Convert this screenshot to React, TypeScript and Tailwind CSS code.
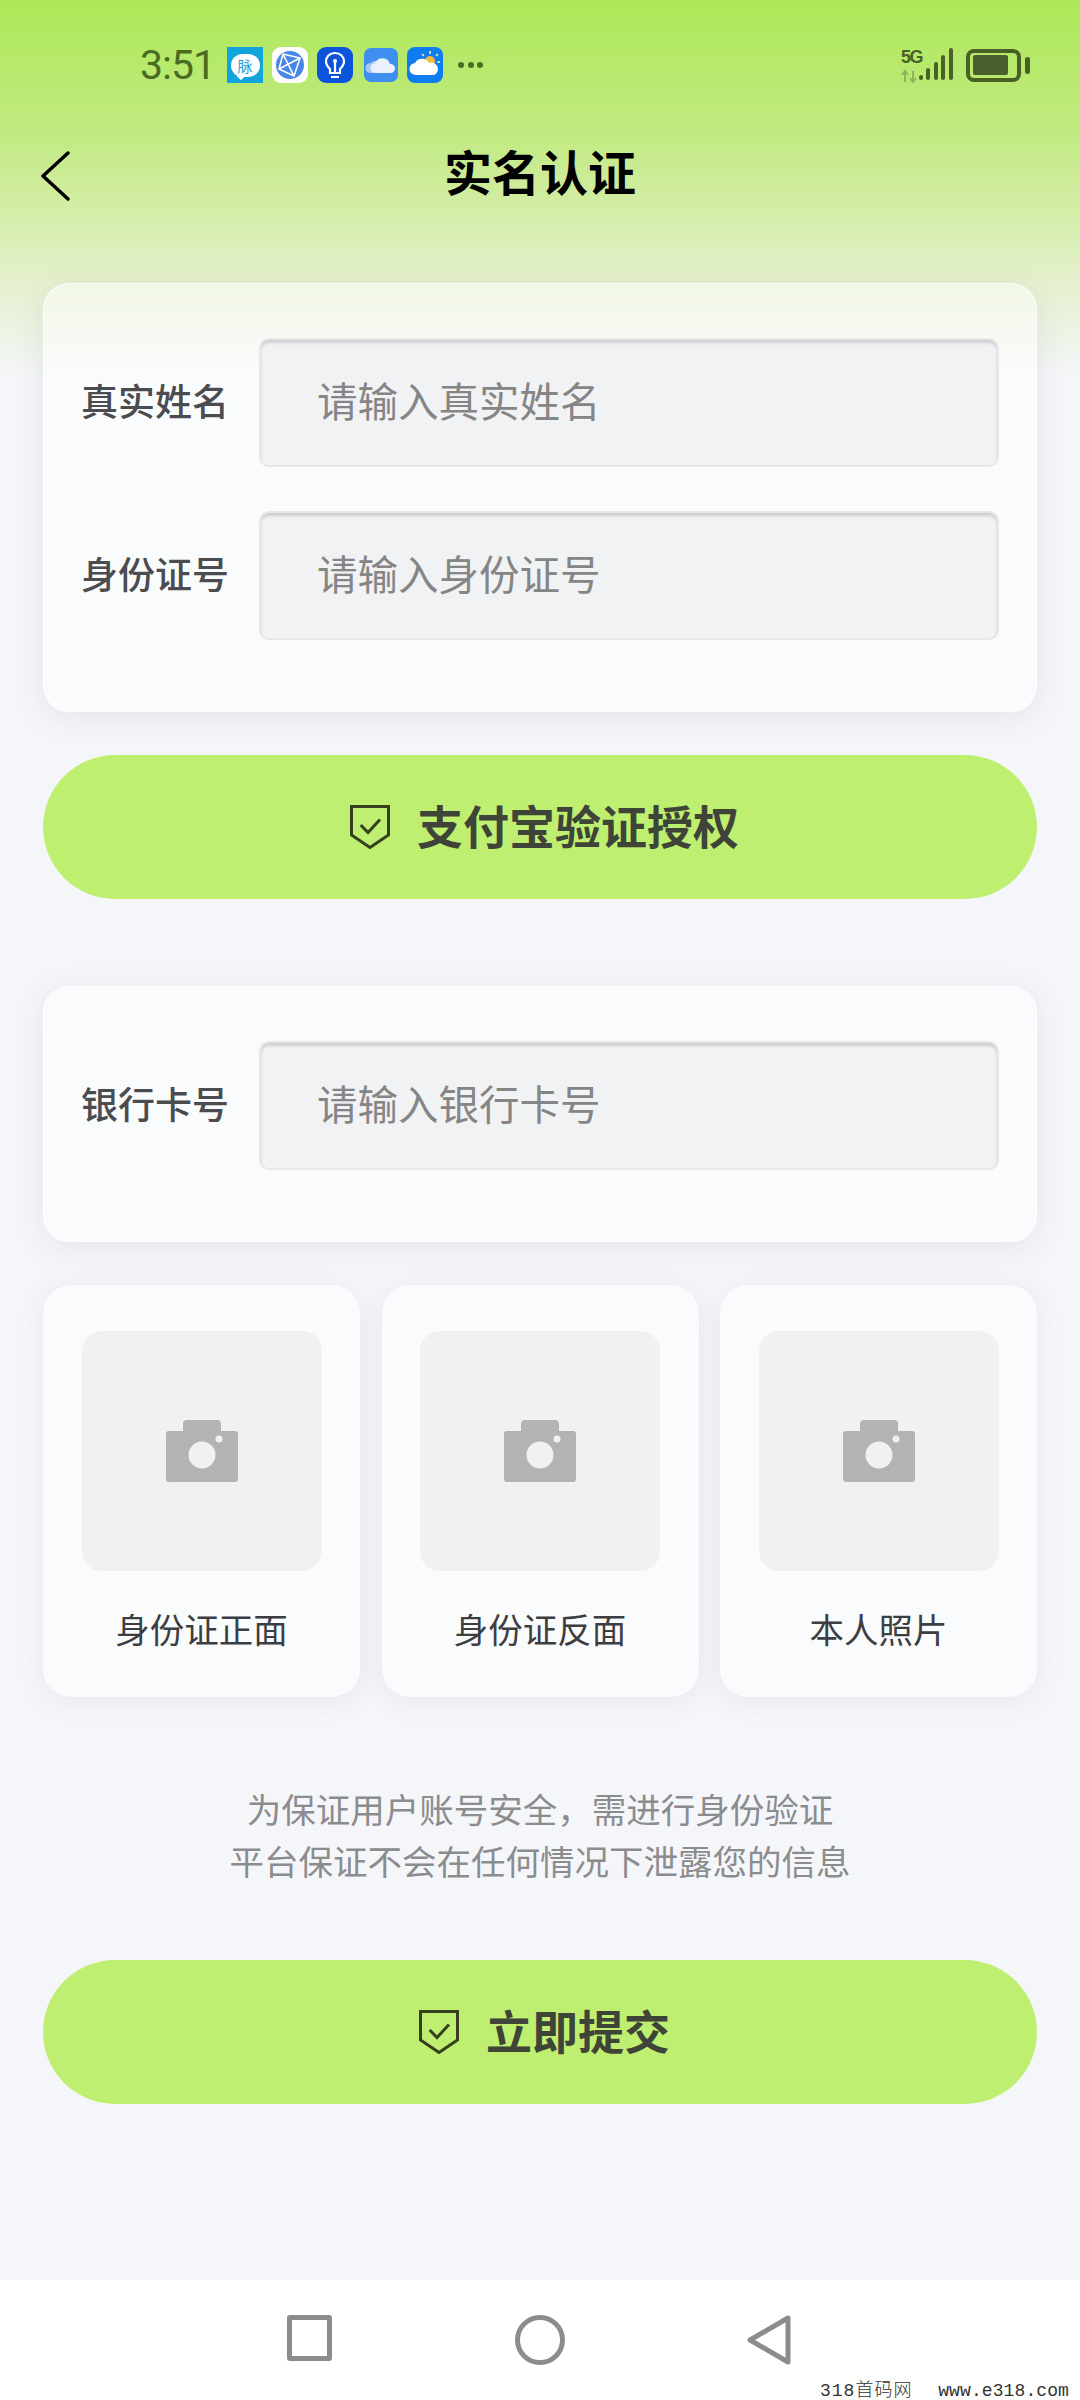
import type { ReactNode } from "react";

const CJK = { fontFamily: '"Noto Sans CJK SC", "Noto Sans", sans-serif' };

function ShieldIcon({ className }: { className: string }) {
  return (
    <svg viewBox="0 0 40 44" fill="none" className={className}>
      <path d="M1.5 1.5H38.5V30L20 42.500L1.5 30V1.5Z" stroke="#36401f" strokeWidth="3" strokeLinejoin="miter" />
      <path d="M10.700 20L18 27.500L30 14.500" stroke="#36401f" strokeWidth="3" />
    </svg>
  );
}

function CameraIcon() {
  return (
    <svg viewBox="0 0 72 62" className="h-[62px] w-[72px]">
      <path
        d="M17 11V4Q17 0 21 0H51Q55 0 55 4V11H69Q72 11 72 14V59Q72 62 69 62H3Q0 62 0 59V14Q0 11 3 11Z"
        fill="#b3b3b3"
      />
      <circle cx="36" cy="35" r="13.5" fill="#f0f1f3" />
      <circle cx="53" cy="19" r="3.5" fill="#f0f1f3" />
    </svg>
  );
}

function Field({ label, placeholder }: { label: string; placeholder: string }) {
  return (
    <div className="flex items-center">
      <span className="w-[178px] shrink-0 pb-[4px] text-[37px] font-medium text-[#4a4c4f]">{label}</span>
      <input
        readOnly
        placeholder={placeholder}
        style={CJK}
        className="h-[129px] w-[740px] rounded-[10px] border-2 border-[#e6e7e9] bg-[#f1f2f4] pb-[6px] pl-[56px] text-[40.5px] shadow-[inset_0_3px_3px_rgba(0,0,0,0.15)] outline-none placeholder:text-[#858585]"
      />
    </div>
  );
}

function Card({ children, className }: { children: ReactNode; className: string }) {
  return (
    <div
      className={`rounded-[26px] border border-white/70 bg-white/50 pl-[37px] pt-[54px] shadow-[0_6px_32px_rgba(60,70,90,0.09)] ${className}`}
    >
      {children}
    </div>
  );
}

function PrimaryButton({ label, className }: { label: string; className: string }) {
  return (
    <button
      type="button"
      className={`flex h-[144px] w-full items-center justify-center gap-[27px] rounded-full bg-[#beef70] pl-[9px] text-[46px] font-bold text-[#3e4438] ${className}`}
    >
      <ShieldIcon className="h-[44px] w-[40px]" />
      <span className="pb-[6px]">{label}</span>
    </button>
  );
}

function UploadTile({ label }: { label: string }) {
  return (
    <div className="flex h-[412px] flex-col items-center rounded-[28px] bg-[#fafbfd] px-[39px] pt-[46px] shadow-[0_4px_28px_rgba(60,70,90,0.08)]">
      <div className="flex h-[240px] w-[240px] items-center justify-center rounded-[20px] bg-[#f0f1f3]">
        <CameraIcon />
      </div>
      <span className="mt-[32px] text-[34.5px] leading-[50px] text-[#3c3e41]">{label}</span>
    </div>
  );
}

function StatusIcons() {
  return (
    <div className="flex items-center">
      <div className="relative flex h-[36px] w-[36px] items-center justify-center bg-[#12a5dc]">
        <div className="flex h-[23px] w-[29px] items-center justify-center rounded-full bg-white text-[15px] leading-none text-[#1a9ed6]">
          脉
        </div>
        <div className="absolute bottom-[4px] left-[11px] h-[6px] w-[6px] rotate-45 bg-white" />
      </div>
      <svg viewBox="0 0 36 36" className="ml-[9px] h-[36px] w-[36px]">
        <rect width="36" height="36" rx="9" fill="#fff" />
        <circle cx="18" cy="18" r="14" fill="#4a86e8" />
        <path d="M11 7L7 22L22 29L28 11L11 7M7 22L28 11M11 7L22 29" stroke="#fff" strokeWidth="1.6" fill="none" />
      </svg>
      <svg viewBox="0 0 36 36" className="ml-[9px] h-[36px] w-[36px]">
        <rect width="36" height="36" rx="9" fill="#0c54dc" />
        <path
          d="M18 6C12.5 6 9 10 9 14.5C9 18 11 20 13 22V26H23V22C25 20 27 18 27 14.5C27 10 23.500 6 18 6Z"
          fill="none"
          stroke="#fff"
          strokeWidth="2.2"
        />
        <path d="M18 14V25M14 30H22" stroke="#fff" strokeWidth="2.2" />
        <circle cx="18" cy="14" r="2" fill="#fff" />
      </svg>
      <svg viewBox="0 0 34 34" className="ml-[11px] h-[34px] w-[34px]">
        <rect width="34" height="34" rx="7" fill="#3f8ff0" />
        <path d="M6 25a5 5 0 0 1 1-10a6 6 0 0 1 6-2h6v12Z" fill="#a9c8f5" />
        <path d="M12 25a5 5 0 0 1-1-10a8 8 0 0 1 15 1a4.500 4.500 0 0 1 1 9Z" fill="#e8f1fd" />
      </svg>
      <svg viewBox="0 0 36 36" className="ml-[9px] h-[36px] w-[36px]">
        <rect width="36" height="36" rx="8" fill="#0d7df0" />
        <circle cx="23" cy="14" r="5" fill="#f5b942" />
        <path d="M23 4V7M31 7L29 9M33 15H30M15 7L17 9" stroke="#ffe7a8" strokeWidth="1.6" />
        <path d="M9 28a6 6 0 0 1-1-12a8 8 0 0 1 14 0a6 6 0 0 1 5 12Z" fill="#fff" />
      </svg>
      <div className="ml-[15px] flex gap-[3.5px]">
        <span className="h-[6px] w-[6px] rounded-full bg-[#4a6b22]" />
        <span className="h-[6px] w-[6px] rounded-full bg-[#4a6b22]" />
        <span className="h-[6px] w-[6px] rounded-full bg-[#4a6b22]" />
      </div>
    </div>
  );
}

function SignalBattery() {
  return (
    <div className="flex items-center">
      <svg viewBox="0 0 54 36" className="h-[36px] w-[54px]">
        <path d="M4 35V25M1 28L4 24L7 28M12 24V34M9 31L12 35L15 31" stroke="#8fb25c" strokeWidth="2" fill="none" />
        <rect x="18" y="28" width="4" height="5" rx="2" fill="#4a6126" />
        <rect x="25" y="21" width="4" height="12" rx="2" fill="#4a6126" />
        <rect x="33" y="15" width="4" height="18" rx="2" fill="#4a6126" />
        <rect x="40" y="8" width="4" height="25" rx="2" fill="#4a6126" />
        <rect x="48" y="1" width="4" height="32" rx="2" fill="#4a6126" />
      </svg>
      <div className="ml-[11px] flex h-[33px] w-[55px] items-center rounded-[8px] border-[4px] border-[#4a6126] pl-[3px]">
        <div className="h-[20px] w-[35px] rounded-[2px] bg-[#4a5f2c]" />
      </div>
      <div className="ml-[4px] h-[17px] w-[5px] rounded-full bg-[#4a6126]" />
    </div>
  );
}

export default function App() {
  return (
    <div
      style={CJK}
      className="relative flex h-[2400px] w-[1080px] flex-col overflow-hidden bg-[linear-gradient(180deg,#aee858_0px,#c0ea80_130px,#d4eda6_210px,#e4f0cd_280px,#f5f6fa_380px)]"
    >
      <div className="flex h-[127px] items-center pl-[140px] pr-[50px] pt-[3px]">
        <span
          className="w-[87px] text-[41px] leading-none tracking-[-1px] text-[#4a6b22]"
          style={{ fontFamily: "Roboto, sans-serif" }}
        >
          3:51
        </span>
        <StatusIcons />
        <div className="relative ml-auto">
          <SignalBattery />
          <span
            className="absolute left-0 top-[1px] text-[18px] font-bold leading-none tracking-[-1.5px] text-[#4a6126]"
            style={{ fontFamily: '"Liberation Sans", sans-serif' }}
          >
            5G
          </span>
        </div>
      </div>

      <div className="relative flex h-[94px] items-center justify-center">
        <svg viewBox="0 0 30 50" fill="none" className="absolute left-[40px] top-[24px] h-[50px] w-[30px]">
          <path d="M28 2L3 25L28 48" stroke="#000" strokeWidth="3.500" strokeLinecap="round" strokeLinejoin="round" />
        </svg>
        <h1 className="pb-[8px] text-[48px] font-bold leading-none text-black">实名认证</h1>
      </div>

      <main className="flex flex-col px-[43px] pt-[62px]">
        <Card className="h-[429px]">
          <div className="flex flex-col gap-[44px]">
            <Field label="真实姓名" placeholder="请输入真实姓名" />
            <Field label="身份证号" placeholder="请输入身份证号" />
          </div>
        </Card>

        <PrimaryButton label="支付宝验证授权" className="mt-[43px]" />

        <Card className="mt-[87px] h-[256px]">
          <Field label="银行卡号" placeholder="请输入银行卡号" />
        </Card>

        <div className="mt-[43px] grid grid-cols-3 gap-[21.5px]">
          <UploadTile label="身份证正面" />
          <UploadTile label="身份证反面" />
          <UploadTile label="本人照片" />
        </div>

        <p className="mt-[85px] text-center text-[34.5px] leading-[52px] text-[#8b8c8e]">
          为保证用户账号安全，需进行身份验证
          <br />
          平台保证不会在任何情况下泄露您的信息
        </p>

        <PrimaryButton label="立即提交" className="mt-[74px]" />
      </main>

      <nav className="mt-auto flex h-[120px] items-start bg-white pl-[287px] pt-[35px]">
        <div className="h-[46px] w-[45px] rounded-[3px] border-[5px] border-[#8c8c8c]" />
        <div className="ml-[183px] h-[50px] w-[50px] rounded-full border-[5px] border-[#8c8c8c]" />
        <svg viewBox="0 0 44 50" fill="none" className="ml-[182px] h-[50px] w-[44px]">
          <path d="M41 3V47L3 25Z" stroke="#8c8c8c" strokeWidth="5" strokeLinejoin="round" />
        </svg>
      </nav>

      <div className="absolute bottom-[-2px] left-[820px] flex w-[249px] justify-between text-[18px] font-light leading-[22px] text-[#333]">
        <span className="tracking-[1px]" style={{ fontFamily: '"Liberation Mono", "Noto Sans CJK SC", monospace' }}>
          318首码网
        </span>
        <span className="tracking-[0.1px]" style={{ fontFamily: '"Liberation Mono", monospace' }}>
          www.e318.com
        </span>
      </div>
    </div>
  );
}
